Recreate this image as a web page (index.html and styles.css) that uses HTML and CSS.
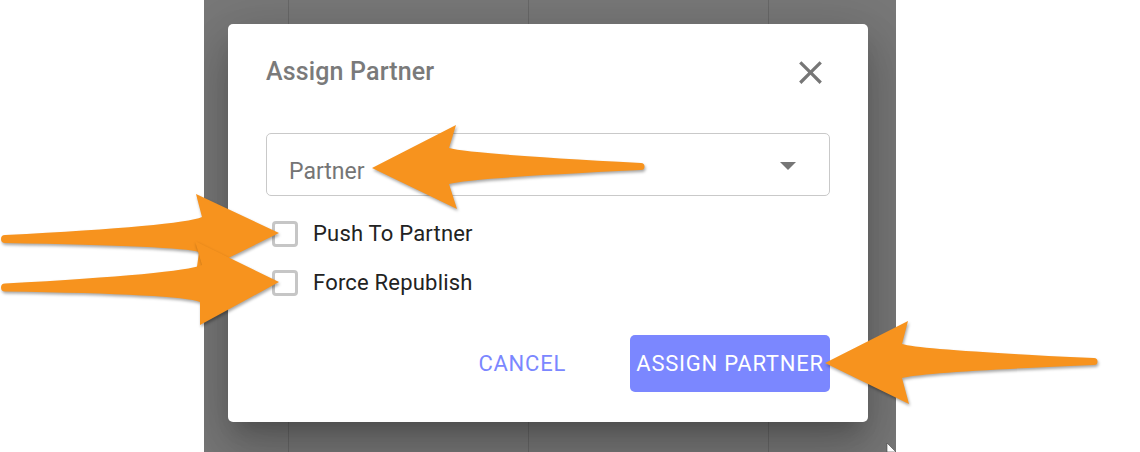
FILE: index.html
```html
<!DOCTYPE html>
<html lang="en">
<head>
<meta charset="utf-8">
<title>Assign Partner</title>
<link rel="stylesheet" href="styles.css">
</head>
<body>
<div class="page">
  <div class="gutter-left"></div>
  <div class="backdrop">
    <div class="table-bg">
      <div class="col col-first"></div>
      <div class="col"></div>
      <div class="col"></div>
      <div class="col col-last"></div>
    </div>
    <div class="dialog">
      <div class="dialog-header">
        <h2 class="dialog-title">Assign Partner</h2>
        <svg class="close-icon" viewBox="0 0 24 24" width="39" height="39"><path d="M19 6.41L17.59 5 12 10.59 6.41 5 5 6.41 10.59 12 5 17.59 6.41 19 12 13.41 17.59 19 19 17.59 13.41 12z"/></svg>
      </div>
      <div class="select">
        <span class="select-label">Partner</span>
        <svg class="select-arrow" viewBox="0 0 16 8" width="16" height="8"><path d="M0 0h16L8 8z"/></svg>
      </div>
      <div class="check-row">
        <span class="check-box"></span>
        <span class="check-label">Push To Partner</span>
      </div>
      <div class="check-row">
        <span class="check-box"></span>
        <span class="check-label">Force Republish</span>
      </div>
      <div class="dialog-actions">
        <button class="btn-text">CANCEL</button>
        <button class="btn-primary">ASSIGN PARTNER</button>
      </div>
    </div>
  </div>
  <div class="gutter-right"></div>
  <svg class="annotations" viewBox="0 0 1140 452" width="1140" height="452">
    <g class="arrow">
      <path d="M372,168 L456,125 L449,148 Q470,154 641,163 A3.5,3.5 0 0 1 641,170 Q470,178 449,184 L457,209 Z"/>
      <path d="M825,363 L908,321 L902,344 Q922,350 1094,358 A3.5,3.5 0 0 1 1094,365 Q922,372 902,378 L909,404 Z"/>
      <path d="M279,233 L196,194 L202,217 Q180,226 5,235 A4,4 0 0 0 5,243 Q180,246 199,252 L196,274 Z"/>
      <path d="M279,282 L195,241 L202,265 Q180,274 5,283.5 A4,4 0 0 0 5,291.5 Q180,294 200,302 L200,325 Z"/>
    </g>
    <polygon class="cursor" points="887,443 896,452 887,452"/>
  </svg>
</div>
</body>
</html>
```

FILE: styles.css
```css
* { box-sizing: border-box; }

html, body {
  margin: 0;
  padding: 0;
  background: #ffffff;
}

body {
  font-family: Roboto, "Liberation Sans", sans-serif;
}

.page {
  position: relative;
  display: flex;
  width: 1140px;
  height: 452px;
  overflow: hidden;
}

.gutter-left { width: 204px; flex: none; }
.gutter-right { flex: 1; }

.backdrop {
  width: 692px;
  flex: none;
  display: grid;
  background: #787878;
  overflow: hidden;
}

.table-bg {
  grid-area: 1 / 1;
  display: flex;
  height: 452px;
}

.col {
  width: 240px;
  flex: none;
  border-left: 1px solid rgba(0, 0, 0, 0.13);
}

.col-first {
  width: 84px;
  border-left: none;
}

.col-last { flex: 1; }

.dialog {
  grid-area: 1 / 1;
  align-self: start;
  margin: 24px 0 0 24px;
  width: 640px;
  height: 398px;
  background: #ffffff;
  border-radius: 5px;
  padding: 32px 38px 30px;
  display: flex;
  flex-direction: column;
  box-shadow:
    0 14px 19px -9px rgba(0, 0, 0, 0.2),
    0 30px 48px 4px rgba(0, 0, 0, 0.14),
    0 11px 58px 10px rgba(0, 0, 0, 0.12);
}

.dialog-header {
  display: flex;
  align-items: center;
  justify-content: space-between;
  height: 32px;
}

.dialog-title {
  margin: 0;
  font-size: 25px;
  line-height: 32px;
  font-weight: 500;
  letter-spacing: 0.15px;
  color: #7a7a7a;
}

.close-icon {
  margin: -4px 0;
  fill: #767676;
}

.select {
  margin-top: 45px;
  height: 63px;
  border: 1px solid #c9c9c9;
  border-radius: 5px;
  display: flex;
  align-items: center;
  justify-content: space-between;
  padding: 0 33px 0 22px;
}

.select-label {
  padding-top: 13px;
  font-size: 23px;
  line-height: 27px;
  color: #757575;
}

.select-arrow {
  margin-top: 3px;
  fill: #767676;
}

.check-row {
  height: 49px;
  display: flex;
  align-items: center;
}

.select + .check-row { margin-top: 13px; }

.check-box {
  width: 26px;
  height: 26px;
  margin-left: 6px;
  border: 3px solid #c6c6c6;
  border-radius: 4px;
}

.check-label {
  margin-left: 15px;
  font-size: 22px;
  line-height: 26px;
  letter-spacing: 0.2px;
  color: #222222;
}

.dialog-actions {
  margin-top: 28px;
  height: 57px;
  display: flex;
  align-items: center;
  justify-content: flex-end;
}

.btn-text,
.btn-primary {
  font-family: Roboto, "Liberation Sans", sans-serif;
  font-size: 22px;
  font-weight: 400;
  letter-spacing: 0.75px;
  border: none;
  white-space: nowrap;
  cursor: pointer;
}

.btn-text {
  background: none;
  color: #7b87ff;
  padding: 0 10px;
  margin-right: 54px;
  height: 57px;
}

.btn-primary {
  width: 200px;
  height: 57px;
  padding: 0;
  background: #7b87ff;
  color: #ffffff;
  border-radius: 5px;
  text-align: center;
}

.annotations {
  position: absolute;
  left: 0;
  top: 0;
  pointer-events: none;
}

.arrow path {
  fill: #f7931e;
  filter: drop-shadow(1px 2px 1.5px rgba(0, 0, 0, 0.35));
}

.cursor {
  fill: #ffffff;
  stroke: #444444;
  stroke-width: 0.6;
}
```
